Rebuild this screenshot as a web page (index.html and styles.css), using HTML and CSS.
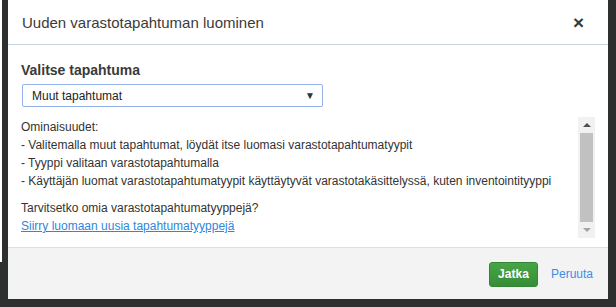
FILE: index.html
```html
<!DOCTYPE html>
<html lang="fi">

<head>
    <meta charset="UTF-8">
    <title>Uuden varastotapahtuman luominen</title>
    <link rel="stylesheet" href="styles.css">
</head>

<body>
    <div class="edge"></div>
    <div class="modal">
        <div class="modal-header">
            <span class="modal-title">Uuden varastotapahtuman luominen</span>
            <span class="close">&times;</span>
        </div>

        <div class="modal-body">
            <div class="field-label">Valitse tapahtuma</div>
            <div class="select">
                <span>Muut tapahtumat</span>
                <span class="caret">&#9660;</span>
            </div>

            <div class="info">
                <div class="info-text">
                    <p>
                        Ominaisuudet:<br>
                        - Valitemalla muut tapahtumat, löydät itse luomasi varastotapahtumatyypit<br>
                        - Tyyppi valitaan varastotapahtumalla<br>
                        - Käyttäjän luomat varastotapahtumatyypit käyttäytyvät varastotakäsittelyssä, kuten inventointityyppi
                    </p>
                    <p>
                        Tarvitsetko omia varastotapahtumatyyppejä?<br>
                        <a href="#">Siirry luomaan uusia tapahtumatyyppejä</a>
                    </p>
                </div>
                <div class="scrollbar">
                    <span class="arrow up"></span>
                    <span class="thumb"></span>
                    <span class="arrow down"></span>
                </div>
            </div>
        </div>

        <div class="modal-footer">
            <div class="button">Jatka</div>
            <a class="cancel" href="#">Peruuta</a>
        </div>
    </div>
</body>

</html>
```

FILE: styles.css
```css
body * {
    box-sizing: border-box;
}

body {
    margin: 0;
    width: 616px;
    height: 307px;
    overflow: hidden;
    background: #2e302f;
    font-family: "Liberation Sans", Arial, sans-serif;
    color: #333333;
    display: flex;
    align-items: flex-start;
}

.edge {
    width: 2px;
    height: 262px;
    background: #ffffff;
}

.modal {
    margin-left: 6px;
    width: 600px;
    height: 299px;
    background: #ffffff;
    display: flex;
    flex-direction: column;
}

.modal-header {
    height: 45px;
    display: flex;
    align-items: center;
    justify-content: space-between;
    padding: 0 24px 0 14px;
    border-bottom: 1px solid #c5d5e2;
}

.modal-title {
    font-size: 15px;
    color: #3b3b3b;
    padding-top: 1px;
}

.close {
    font-size: 19px;
    font-weight: 700;
    color: #3a3a3a;
    line-height: 1;
}

.modal-body {
    flex: 1;
    padding: 16px 13px 0 13px;
}

.field-label {
    font-size: 14px;
    font-weight: 700;
    color: #3a3a3a;
    line-height: 18px;
}

.select {
    margin-top: 5px;
    margin-left: 1px;
    width: 301px;
    height: 23px;
    border: 1px solid #93b2ec;
    border-radius: 2px;
    display: flex;
    align-items: center;
    justify-content: space-between;
    padding: 0 7px 0 9px;
    font-size: 12px;
    color: #222222;
}

.caret {
    font-size: 10px;
    color: #333333;
}

.info {
    margin-top: 10px;
    height: 121px;
    display: flex;
}

.info-text {
    flex: 1;
    font-size: 12px;
    line-height: 18px;
    color: #333333;
    padding-top: 1px;
}

.info-text p {
    margin: 0 0 9px 0;
}

a {
    color: #2f86dd;
    text-decoration: underline;
}

.scrollbar {
    width: 17px;
    background: #f1f1f1;
    display: flex;
    flex-direction: column;
    align-items: center;
}

.arrow {
    width: 0;
    height: 0;
    border-left: 4px solid transparent;
    border-right: 4px solid transparent;
    margin: 6px 0;
}

.arrow.up {
    border-bottom: 4px solid #505050;
}

.arrow.down {
    border-top: 4px solid #a3a3a3;
}

.thumb {
    flex: 1;
    width: 13px;
    background: #c1c1c1;
}

.modal-footer {
    height: 52px;
    border-top: 1px solid #d9dfe3;
    background: #f3f3f3;
    display: flex;
    align-items: center;
    justify-content: flex-end;
    gap: 13px;
    padding: 1px 15px 0 0;
}

.button {
    width: 49px;
    height: 25px;
    display: flex;
    align-items: center;
    justify-content: center;
    background: linear-gradient(#46a546, #378d37);
    border: 1px solid #348634;
    border-radius: 3px;
    color: #ffffff;
    font-size: 12px;
    font-weight: 700;
}

.cancel {
    text-decoration: none;
    font-size: 12px;
    color: #3a8ee6;
}
```
